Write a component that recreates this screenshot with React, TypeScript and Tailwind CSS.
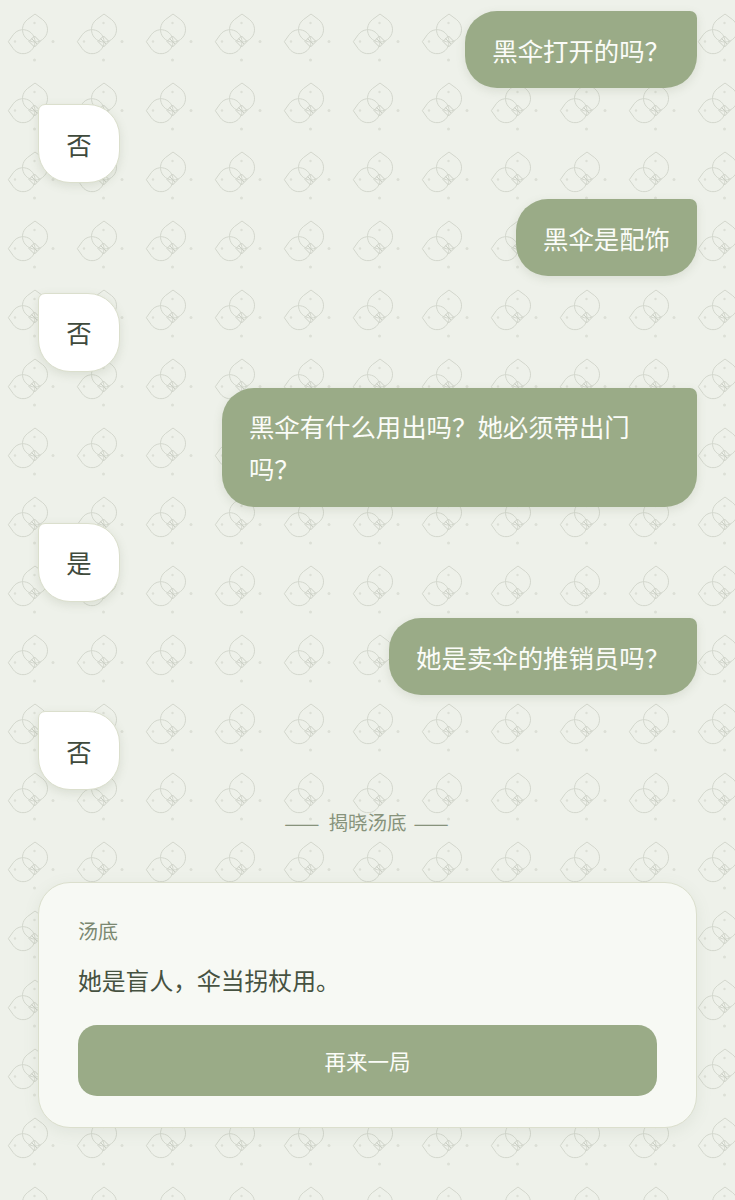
import React from 'react';

type Message = { from: 'me' | 'host'; text: React.ReactNode };

const messages: Message[] = [
  { from: 'me', text: '黑伞打开的吗？' },
  { from: 'host', text: '否' },
  { from: 'me', text: '黑伞是配饰' },
  { from: 'host', text: '否' },
  { from: 'me', text: '黑伞有什么用出吗？她必须带出门吗？' },
  { from: 'host', text: '是' },
  { from: 'me', text: '她是卖伞的推销员吗？' },
  { from: 'host', text: '否' },
];

const PatternBackground: React.FC = () => (
  <svg className="absolute inset-0 w-full h-full" aria-hidden="true">
    <defs>
      <pattern id="leaves" width="69" height="69" patternUnits="userSpaceOnUse">
        <g fill="none" stroke="#d2d6cc" strokeWidth="1">
          <path d="M35 14 L42.3 19.4 A12.5 12.5 0 1 1 27.7 19.4 Z" />
          <path d="M8.3 41.7 L13.2 34.8 A12 12 0 1 1 13.2 48.6 Z" />
          <path d="M34.5 36 L40 41.5 L34.5 47 L29 41.5 Z" stroke="#cbcfc5" />
          <path d="M31.5 38.5 L37 44" stroke="#cbcfc5" />
        </g>
        <g fill="#dcdfd6">
          <circle cx="34.5" cy="23" r="1.2" />
          <circle cx="15" cy="41.5" r="1.2" />
          <circle cx="53" cy="41.5" r="1.5" />
          <circle cx="34.5" cy="60" r="1.5" />
        </g>
      </pattern>
    </defs>
    <rect width="100%" height="100%" fill="url(#leaves)" />
  </svg>
);

const Bubble: React.FC<Message> = ({ from, text }) => {
  if (from === 'me') {
    return (
      <div className="flex justify-end">
        <div className="max-w-[72.1%] px-[27px] py-[17.5px] bg-[#9aab87] text-[#fbfcf8] rounded-[32px] rounded-tr-[7px] shadow-[0_3px_10px_rgba(110,125,95,0.16)]">
          {text}
        </div>
      </div>
    );
  }
  return (
    <div className="flex justify-start">
      <div className="px-[27.3px] py-[17.5px] bg-white text-[#3f4a3c] border border-[#dbdfcd] rounded-[32px] rounded-tl-[7px] shadow-[0_3px_10px_rgba(110,125,95,0.16)]">
        {text}
      </div>
    </div>
  );
};

export default function App() {
  return (
    <div className="relative h-[1200px] overflow-hidden bg-[#eef1ea] font-['Noto_Sans_CJK_SC','Noto_Sans',sans-serif]">
      <PatternBackground />
      <div className="relative px-[38px] pt-[11px]">
        <div className="flex flex-col gap-[16.2px] text-[25.4px] leading-[42px]">
          {messages.map((m, i) => (
            <Bubble key={i} from={m.from} text={m.text} />
          ))}
        </div>
        <div className="mt-[18px] flex justify-center items-center gap-[7px] text-[19.5px] leading-[28px] text-[#87937c]">
          <span className="text-[21px] tracking-[2px]">——</span>
          <span>揭晓汤底</span>
          <span className="text-[21px] tracking-[2px]">——</span>
        </div>
        <div className="mt-[46px] px-[39px] pt-[33px] pb-[31px] bg-[#f7f9f4] border border-[#dbdfcd] rounded-[32px] shadow-[0_4px_16px_rgba(110,125,95,0.1)]">
          <div className="text-[20px] leading-[30px] text-[#7b8871]">汤底</div>
          <div className="mt-[15px] text-[23.8px] leading-[38px] text-[#465241]">她是盲人，伞当拐杖用。</div>
          <button className="block w-full mt-[26px] h-[71px] rounded-[19px] bg-[#9aab87] text-[#fbfcf8] text-[21.5px]">再来一局</button>
        </div>
      </div>
    </div>
  );
}
